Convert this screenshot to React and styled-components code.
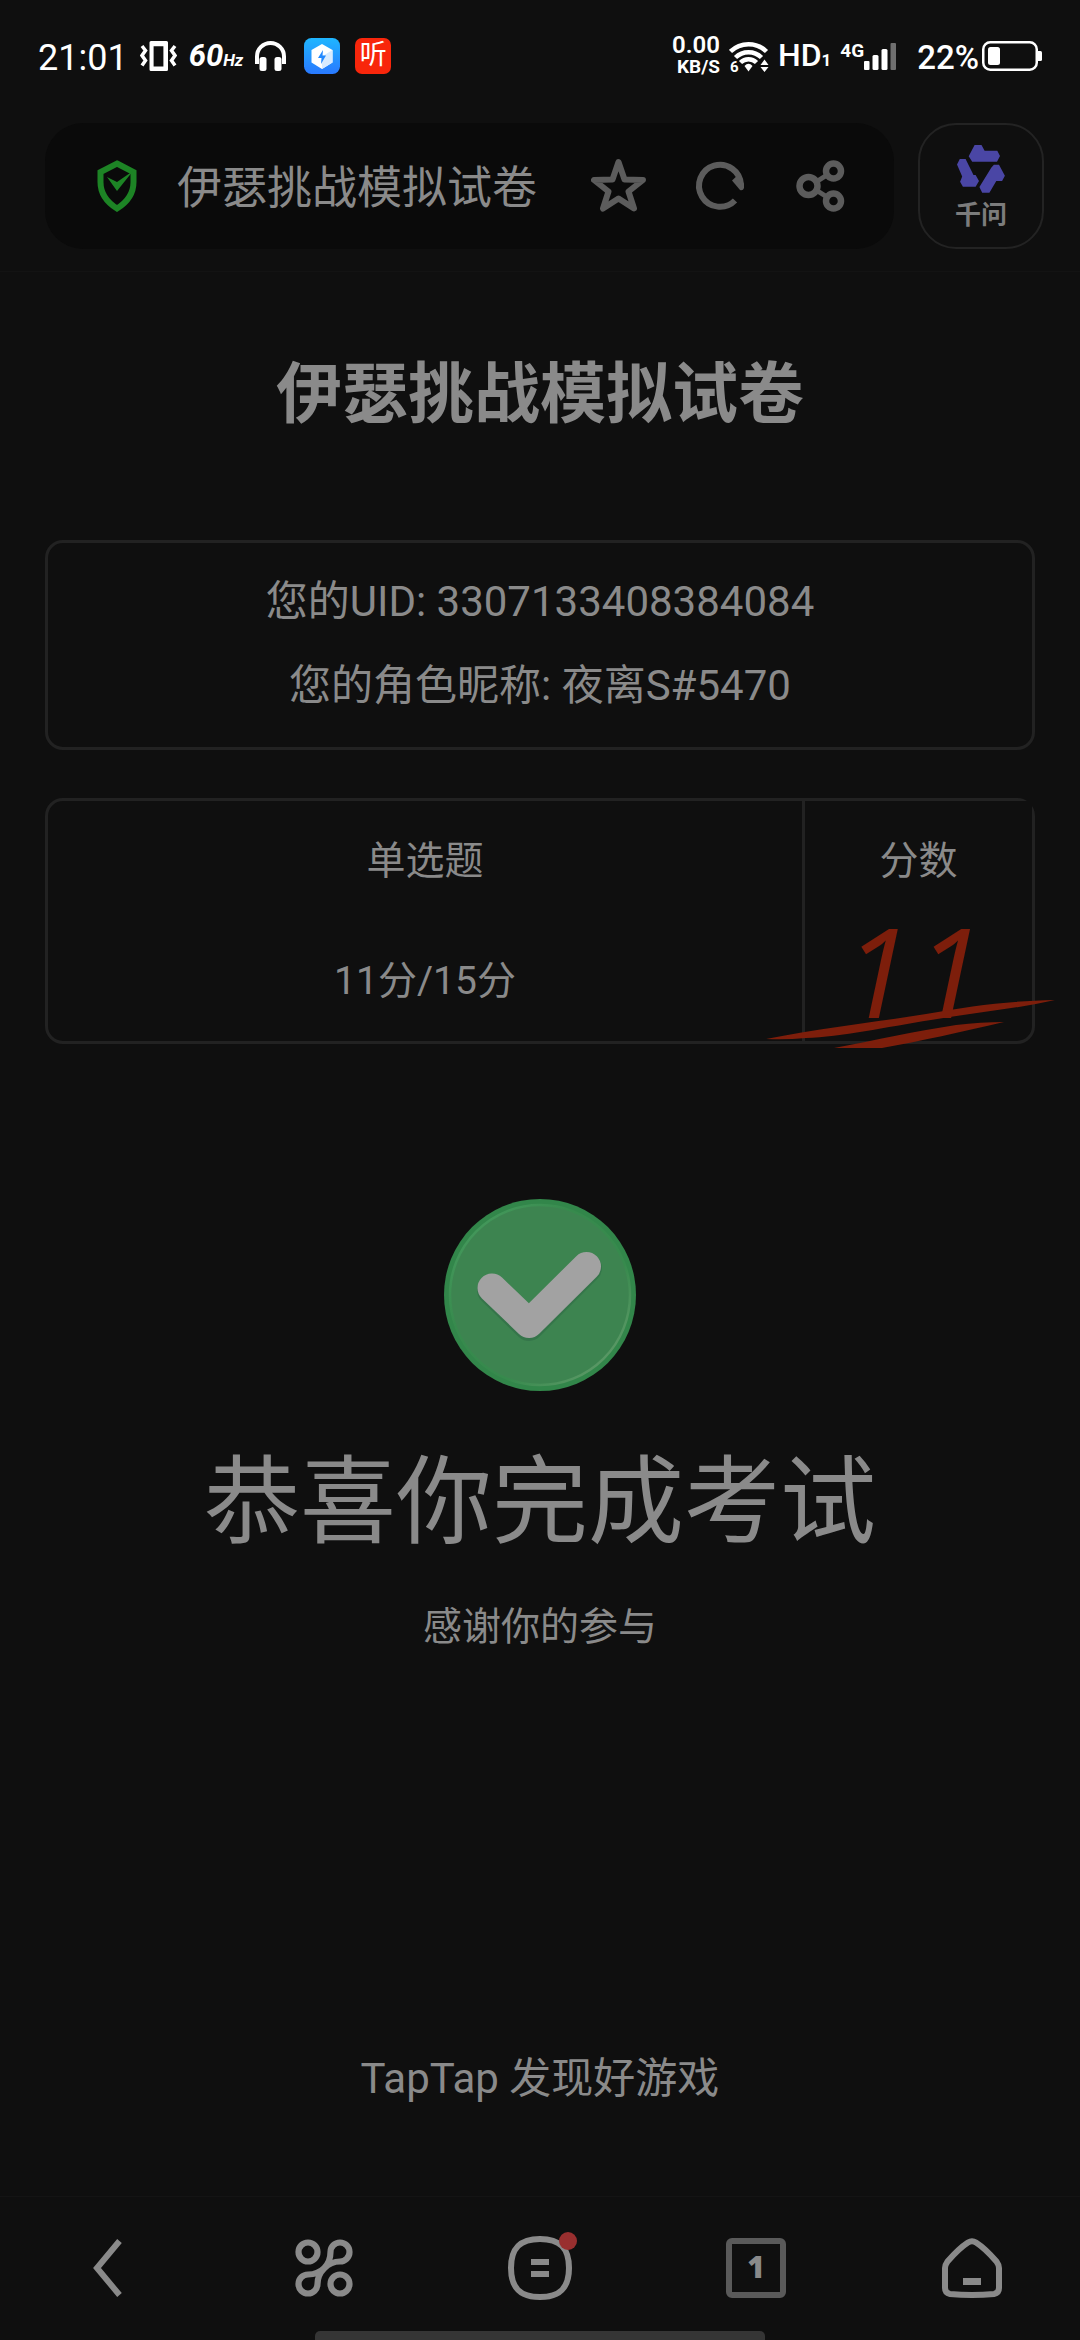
import React from "react";

import styled, { createGlobalStyle } from "styled-components";

const GlobalStyle = createGlobalStyle`
  * {
    box-sizing: border-box;
  }
  body {
    margin: 0;
    background: #0f0f0f;
    color: #8a8a8a;
    font-family: Roboto, "Noto Sans CJK SC", sans-serif;
  }
  button {
    padding: 0;
    border: 0;
    background: none;
    color: inherit;
    font: inherit;
    cursor: pointer;
  }
  svg {
    display: block;
    flex: none;
  }
`

const Page = styled.div`
  display: flex;
  flex-direction: column;
  min-height: 100vh;
`

/* status bar */

const StatusBar = styled.div`
  display: flex;
  justify-content: space-between;
  align-items: center;
  height: 112px;
  padding: 0 38px;
  color: #fff;
`

const StatusGroup = styled.div`
  display: flex;
  align-items: center;
  gap: ${props => props.$gap}px;
`

const StatusText = styled.span`
  padding-top: 3px;
  font-size: 33px;
  font-weight: 500;
  line-height: 40px;

  small {
    font-size: 17px;
    font-weight: 700;
  }
`

const Clock = styled(StatusText)`
  font-size: 36px;
  font-weight: 400;
`

const Hertz = styled(StatusText)`
  font-size: 31px;
  font-style: italic;
  font-weight: 700;
`

const Hd = styled(StatusText)`
  font-size: 32px;
`

const AppIcons = styled.div`
  display: flex;
  gap: 15px;
  padding-left: 6px;
`

const ListenIcon = styled.span`
  width: 36px;
  height: 36px;
  border-radius: 7px;
  background: #f8260b;
  font-size: 27px;
  line-height: 34px;
  text-align: center;
`

const Speed = styled.div`
  display: flex;
  flex-direction: column;
  align-items: flex-end;
  font-size: 24px;
  font-weight: 600;
  line-height: 22px;

  small {
    font-size: 19px;
    font-weight: 700;
  }
`

const Signal = styled.div`
  display: flex;
  align-items: flex-start;
  font-size: 19px;
  font-weight: 700;
  line-height: 16px;
`

const Power = styled.div`
  display: flex;
  align-items: center;
  gap: 3px;
  padding-left: 12px;
`

/* browser toolbar */

const Toolbar = styled.header`
  display: flex;
  gap: 24px;
  padding: 11px 36px 22px 45px;
  border-bottom: 1px solid #131313;
`

const AddressBar = styled.div`
  display: flex;
  flex: 1;
  align-items: center;
  gap: 45px;
  height: 126px;
  padding: 0 45px 0 52px;
  border-radius: 38px;
  background: #0a0a0a;
  color: #5c5c5c;
`

const Address = styled.button`
  display: flex;
  flex: 1;
  align-items: center;
  gap: 40px;
  color: #8a8a8a;
  font-size: 45px;
  line-height: 60px;
  white-space: nowrap;

  span {
    padding-top: 5px;
  }
`

const AskButton = styled.button`
  display: flex;
  flex-direction: column;
  align-items: center;
  justify-content: center;
  gap: 6px;
  width: 126px;
  height: 126px;
  padding-top: 4px;
  border: 2px solid #232323;
  border-radius: 38px;
  color: #7c7c7c;
  font-size: 26px;
  font-weight: 700;
  line-height: 32px;
`

/* page content */

const Content = styled.main`
  display: flex;
  flex: 1;
  flex-direction: column;
  padding: 75px 45px 82px;
`

const Title = styled.h1`
  margin: 0 0 97px;
  font-size: 66px;
  line-height: 96px;
  text-align: center;
`

const Card = styled.section`
  border: 3px solid #222;
  border-radius: 18px;
`

const Profile = styled(Card)`
  padding: 17px 0 19px;
  margin-bottom: 48px;
  font-size: 42px;
  line-height: 84px;
  text-align: center;

  p {
    margin: 0;
  }
`

const ScoreTable = styled.table`
  width: 100%;
  border-collapse: separate;
  border-spacing: 0;
  table-layout: fixed;
`

const cell = `
  height: 120px;
  padding: 0;
  font-size: 39px;
  font-weight: 400;
  line-height: 60px;
  text-align: center;
`

const HeadCell = styled.th`
  ${cell}
`

const ScoreHead = styled(HeadCell)`
  width: 230px;
  border-left: 3px solid #222;
  background: #0f0f0f;
`

const Cell = styled.td`
  ${cell}
`

const ScoreCell = styled(Cell)`
  position: relative;
  border-left: 3px solid #222;
  vertical-align: top;
`

const Score = styled.div`
  display: flex;
  justify-content: center;
  gap: 4px;
  padding-right: 10px;
  color: #7d1e0b;
  font-family: "Open Sans", sans-serif;
  font-size: 124px;
  font-style: italic;
  line-height: 98px;
`

const Underline = styled.svg`
  position: absolute;
  right: -24px;
  bottom: -7px;
`

const Result = styled.section`
  display: flex;
  flex-direction: column;
  align-items: center;
  padding-top: 155px;
`

const ResultTitle = styled.h2`
  margin: 39px 0 23px;
  font-size: 96px;
  font-weight: 400;
  line-height: 144px;
`

const ResultText = styled.p`
  margin: 0;
  font-size: 39px;
  line-height: 60px;
`

const Slogan = styled.footer`
  margin-top: auto;
  font-size: 42px;
  line-height: 70px;
  text-align: center;
`

/* bottom navigation */

const BottomBar = styled.nav`
  display: flex;
  height: 135px;
  border-top: 1px solid #141414;
`

const NavButton = styled.button`
  display: flex;
  flex: 1;
  align-items: center;
  justify-content: center;
  padding-top: 8px;
`

const MenuIcon = styled.span`
  position: relative;
`

const Dot = styled.i`
  position: absolute;
  top: -4px;
  right: -5px;
  width: 18px;
  height: 18px;
  border-radius: 50%;
  background: #992f2f;
`

const TabCount = styled.span`
  width: 60px;
  height: 60px;
  border: 6px solid #5a5a5a;
  border-radius: 6px;
  font-family: "Open Sans", sans-serif;
  font-size: 30px;
  font-weight: 800;
  line-height: 46px;
`

const HomeIndicator = styled.div`
  align-self: center;
  width: 450px;
  max-width: 60%;
  height: 9px;
  border-radius: 5px 5px 0 0;
  background: #353535;
`

const VibrateIcon = () => (
    <svg width="37" height="30" viewBox="0 0 37 30" fill="none" stroke="currentColor" strokeWidth="3.5">
        <path fill="currentColor" stroke="none" fillRule="evenodd" d="M11 0H26.500Q28 0 28 1.500V28.500Q28 30 26.500 30H11Q9.500 30 9.500 28.500V1.500Q9.500 0 11 0ZM13.600 5.300V25.500H23.400V5.300Z" />
        <path d="M2 5 5.500 9.500 2 14.500 5.500 19.500 2 24.500M35 5 31.500 9.500 35 14.500 31.500 19.500 35 24.500" />
    </svg>
);

const HeadphoneIcon = () => (
    <svg width="31" height="30" viewBox="0 0 31 30">
        <path d="M2 23V15.500A13.500 13.500 0 0 1 29 15.500V23" fill="none" stroke="currentColor" strokeWidth="4" />
        <rect x="4.500" y="16" width="7" height="14" rx="2.500" fill="currentColor" />
        <rect x="19.500" y="16" width="7" height="14" rx="2.500" fill="currentColor" />
    </svg>
);

const BoostIcon = () => (
    <svg width="36" height="36" viewBox="0 0 36 36">
        <defs>
            <linearGradient id="boost" x1="0" y1="0" x2="0" y2="1">
                <stop offset="0" stopColor="#1fb6ff" />
                <stop offset="1" stopColor="#2979ff" />
            </linearGradient>
        </defs>
        <rect width="36" height="36" rx="7.500" fill="url(#boost)" />
        <path d="M18 6 28.500 12V24.500L18 31 7.500 24.500V12Z" fill="#fff" />
        <path d="M18 18.500 28.500 12V24.500L18 31Z" fill="#d8ebff" />
        <path d="M19 12 14 20H17.500L17 26 22 17.500H18.500Z" fill="#2389ff" />
    </svg>
);

const WifiIcon = () => (
    <svg width="40" height="39" viewBox="0 -4 40 39" fill="none" stroke="currentColor" strokeWidth="4.500">
        <path d="M1.500 10.500A26 26 0 0 1 37.500 10.500M6.500 16.500A18.500 18.500 0 0 1 32.500 16.500M11.500 21.500A11.500 11.500 0 0 1 27.500 21.500" />
        <path d="M15.500 25Q19.500 20.500 23.500 25L19.500 30.500Z" fill="currentColor" stroke="none" />
        <path d="M31.500 24 35.500 18.500 39.500 24ZM31.500 26 35.500 31 39.500 26Z" fill="currentColor" stroke="none" />
        <text x="1" y="30.500" fill="currentColor" stroke="none" fontSize="15" fontWeight="700">6</text>
    </svg>
);

const BarsIcon = () => (
    <svg width="32" height="27" viewBox="0 0 32 27" fill="currentColor">
        <rect y="18" width="5.500" height="9" rx="1" />
        <rect x="8.500" y="12" width="6" height="15" rx="1.500" />
        <rect x="17.500" y="6" width="6" height="21" rx="1.500" />
        <rect x="26.500" width="5.500" height="27" rx="1" fill="#6f6f6f" />
    </svg>
);

const BatteryIcon = () => (
    <svg width="60" height="30" viewBox="0 0 60 30">
        <rect x="1.250" y="1.250" width="53.500" height="27.500" rx="7" fill="none" stroke="currentColor" strokeWidth="2.500" />
        <rect x="6" y="6" width="12" height="18" rx="2.500" fill="currentColor" />
        <path d="M55 10H58.500Q60 10 60 11.500V18.500Q60 20 58.500 20H55Z" fill="currentColor" />
    </svg>
);

const ShieldIcon = () => (
    <svg width="40" height="52" viewBox="0 0 40 52">
        <path d="M20 3.500 36.500 12V22C36.500 33 30.500 42 20 48.500C9.500 42 3.500 33 3.500 22V12Z" fill="none" stroke="#1d8425" strokeWidth="6" />
        <path d="M10 17 20 22 36 11 20 31Z" fill="#1d8425" />
    </svg>
);

const StarIcon = () => (
    <svg width="56" height="56" viewBox="0 0 56 56" fill="none" stroke="currentColor" strokeWidth="6" strokeLinejoin="round">
        <path d="M27.500 4 33.500 21.500 52 22 37.500 33.500 43 50.500 27.500 40.500 12 50.500 17.500 33.500 3 22 21.500 21.500Z" />
    </svg>
);

const ReloadIcon = () => (
    <svg width="56" height="56" viewBox="0 0 56 56">
        <path d="M43 42.500A21 21 0 1 1 49 27" fill="none" stroke="currentColor" strokeWidth="6" />
        <path d="M40 22.500 47 16 52 26V30Q51 33 48 32Z" fill="currentColor" />
    </svg>
);

const ShareIcon = () => (
    <svg width="56" height="56" viewBox="0 0 56 56" fill="none" stroke="currentColor" strokeWidth="6.500">
        <circle cx="15.500" cy="28" r="9" />
        <circle cx="40.500" cy="13" r="7.500" />
        <circle cx="40.500" cy="43" r="7.500" />
        <path d="M23 24 34 17M23 32 34 39" strokeWidth="5" />
    </svg>
);

const QianwenLogo = () => (
    <svg width="48" height="48" viewBox="0 0 48 48" fill="#4a46a5">
        <path d="M17.600 0H24.500L27.600 5.700H40.300L43 11 40 16.700H15.200L11.700 11.300Z" />
        <path d="M2.800 14H8.600L16.500 30H18.600L22 36 18.600 41.700H5.900L3.100 36.700 5.200 31.500 0 19.500Z" />
        <path d="M36.900 19.700H42L47.900 30.700 45.100 36H39.300L32.400 47.700H25.200L22.400 42 34.400 22.500Z" />
    </svg>
);

const ScoreUnderline = () => (
    <Underline width="290" height="50" viewBox="0 0 290 50" fill="#7d1e0b">
        <path d="M0 41C50 31 110 24 160 16C205 8 240 3 289 2C250 11 205 15 165 22C120 29 75 39 40 40Q20 42 0 41Z" />
        <path d="M68 50C110 42 150 33 190 27Q215 24 238 24C195 34 155 43 116 50Z" />
    </Underline>
);

const SuccessIcon = () => (
    <svg width="192" height="192" viewBox="0 0 192 192" fill="none">
        <defs>
            <linearGradient id="rim" x1="0" y1="0" x2="1" y2="1">
                <stop offset="0" stopColor="#4a9f62" />
                <stop offset="0.35" stopColor="#378a4d" />
                <stop offset="0.65" stopColor="#378a4d" />
                <stop offset="1" stopColor="#6fa074" />
            </linearGradient>
        </defs>
        <circle cx="96" cy="96" r="96" fill="#32864a" />
        <circle cx="96" cy="96" r="90" fill="#3d8450" stroke="url(#rim)" strokeWidth="2.500" />
        <path d="M48 91 85 127 143 69" stroke="#35754a" strokeWidth="30" strokeLinecap="round" strokeLinejoin="round" />
        <path d="M48 89 85 124.500 142.500 67.500" stroke="#a2a2a2" strokeWidth="29" strokeLinecap="round" strokeLinejoin="round" />
    </svg>
);

const BackIcon = () => (
    <svg width="30" height="58" viewBox="0 0 30 58" fill="none" stroke="currentColor" strokeWidth="6">
        <path d="M26.500 2 4 29 26.500 56" />
    </svg>
);

const ToolsIcon = () => (
    <svg width="58" height="58" viewBox="0 0 58 58" fill="none" stroke="currentColor" strokeWidth="6.200">
        <circle cx="13" cy="13" r="9.500" />
        <circle cx="45" cy="45" r="9.500" />
        <path d="M35.500 13A9.500 9.500 0 1 1 45 22.500C33 22.500 22.500 33 22.500 45A9.500 9.500 0 1 1 13 35.500C26 35.500 35.500 26 35.500 13Z" />
    </svg>
);

const MenuGlyph = () => (
    <svg width="64" height="64" viewBox="0 0 64 64" fill="none" stroke="currentColor" strokeWidth="6">
        <path d="M32 3C52 3 61 12 61 32S52 61 32 61 3 52 3 32 12 3 32 3Z" />
        <path d="M23 26H41M23 38H41" />
    </svg>
);

const HomeIcon = () => (
    <svg width="60" height="60" viewBox="0 0 60 60" fill="none" stroke="currentColor" strokeWidth="6">
        <path d="M26 4.500Q30 2 34 4.500C41 9 48 16 54.500 23.500Q57 27 57 30V50Q57 55 52 56Q30 58 8 56Q3 55 3 50V30Q3 27 5.500 23.500C12 16 19 9 26 4.500Z" />
        <path d="M21 43.500H39" strokeWidth="7" />
    </svg>
);

const App = () => {
    const score = 11;

    return (
        <Page>
            <GlobalStyle />
            <StatusBar>
                <StatusGroup $gap={12}>
                    <Clock>21:01</Clock>
                    <VibrateIcon />
                    <Hertz>60<small>Hz</small></Hertz>
                    <HeadphoneIcon />
                    <AppIcons>
                        <BoostIcon />
                        <ListenIcon>听</ListenIcon>
                    </AppIcons>
                </StatusGroup>
                <StatusGroup $gap={9}>
                    <Speed>0.00<small>KB/S</small></Speed>
                    <WifiIcon />
                    <Hd>HD<small>1</small></Hd>
                    <Signal>4G<BarsIcon /></Signal>
                    <Power><StatusText>22%</StatusText><BatteryIcon /></Power>
                </StatusGroup>
            </StatusBar>

            <Toolbar>
                <AddressBar>
                    <Address><ShieldIcon /><span>伊瑟挑战模拟试卷</span></Address>
                    <button aria-label="收藏"><StarIcon /></button>
                    <button aria-label="刷新"><ReloadIcon /></button>
                    <button aria-label="分享"><ShareIcon /></button>
                </AddressBar>
                <AskButton><QianwenLogo />千问</AskButton>
            </Toolbar>

            <Content>
                <Title>伊瑟挑战模拟试卷</Title>
                <Profile>
                    <p>您的UID: 3307133408384084</p>
                    <p>您的角色昵称: 夜离S#5470</p>
                </Profile>
                <Card>
                    <ScoreTable>
                        <thead>
                            <tr>
                                <HeadCell scope="col">单选题</HeadCell>
                                <ScoreHead scope="col">分数</ScoreHead>
                            </tr>
                        </thead>
                        <tbody>
                            <tr>
                                <Cell>{score}分/15分</Cell>
                                <ScoreCell>
                                    <Score>
                                        {String(score).split("").map((digit, i) => <span key={i}>{digit}</span>)}
                                    </Score>
                                    <ScoreUnderline />
                                </ScoreCell>
                            </tr>
                        </tbody>
                    </ScoreTable>
                </Card>
                <Result>
                    <SuccessIcon />
                    <ResultTitle>恭喜你完成考试</ResultTitle>
                    <ResultText>感谢你的参与</ResultText>
                </Result>
                <Slogan>TapTap 发现好游戏</Slogan>
            </Content>

            <BottomBar>
                <NavButton aria-label="返回"><BackIcon /></NavButton>
                <NavButton aria-label="工具"><ToolsIcon /></NavButton>
                <NavButton aria-label="菜单"><MenuIcon><MenuGlyph /><Dot /></MenuIcon></NavButton>
                <NavButton aria-label="标签页"><TabCount>1</TabCount></NavButton>
                <NavButton aria-label="主页"><HomeIcon /></NavButton>
            </BottomBar>
            <HomeIndicator />
        </Page>
    );
};

export default App;
